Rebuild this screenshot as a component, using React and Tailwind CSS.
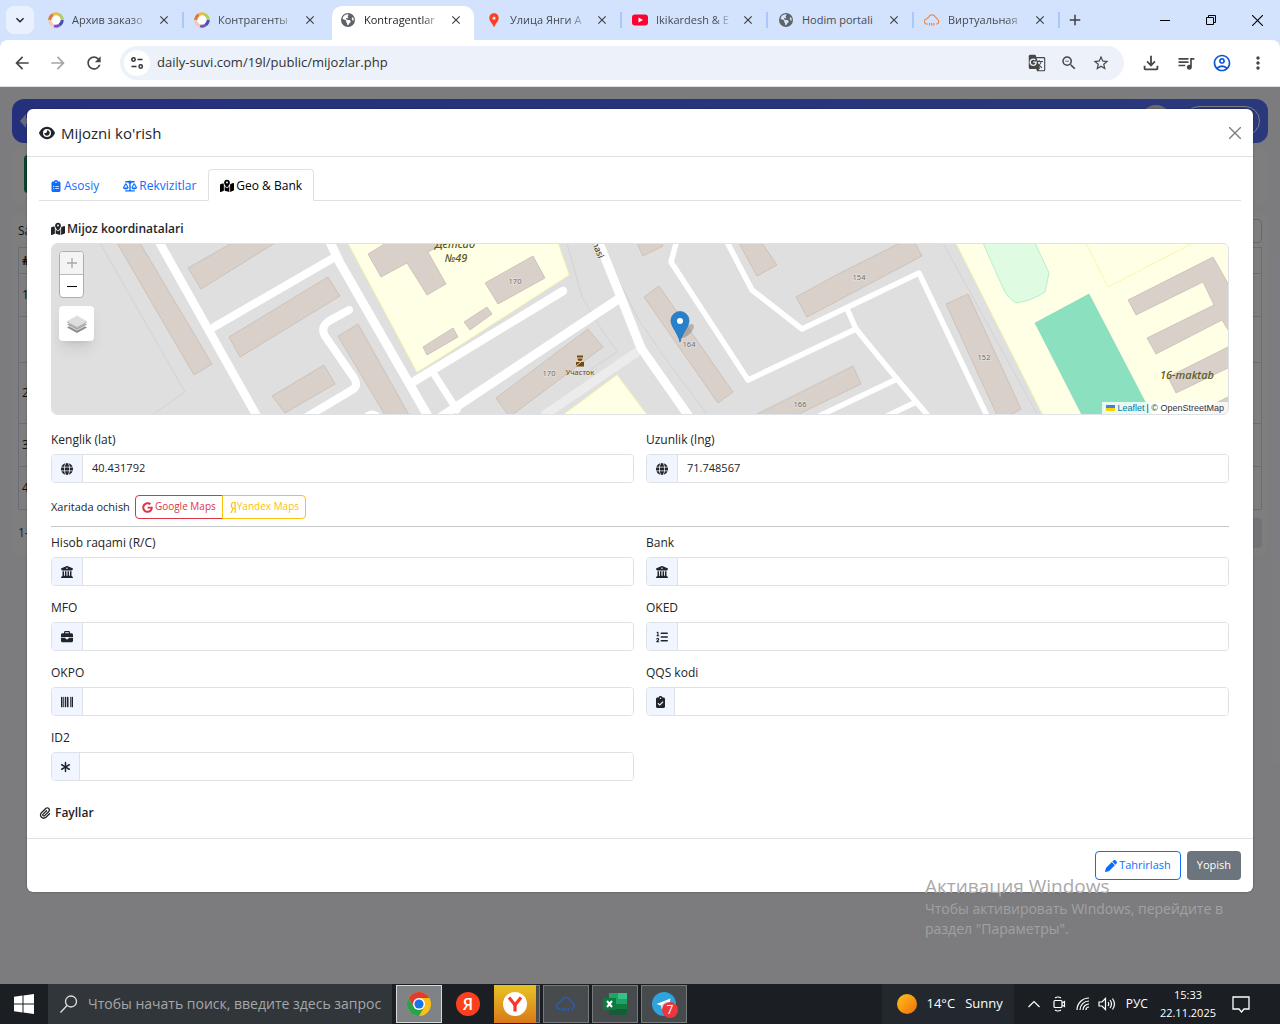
import React from "react";
import {
  FaEye,
  FaClipboardList,
  FaScaleBalanced,
  FaMapLocationDot,
  FaGlobe,
  FaGoogle,
  FaYandex,
  FaBuildingColumns,
  FaBriefcase,
  FaListOl,
  FaBarcode,
  FaClipboardCheck,
  FaAsterisk,
  FaPaperclip,
  FaPen,
  FaEarthAmericas,
} from "react-icons/fa6";
import {
  MdArrowBack,
  MdArrowForward,
  MdRefresh,
  MdGTranslate,
  MdZoomOut,
  MdStarOutline,
  MdOutlineFileDownload,
  MdQueueMusic,
  MdOutlineAccountCircle,
  MdMoreVert,
  MdClose,
  MdAdd,
  MdKeyboardArrowDown,
  MdLocationPin,
} from "react-icons/md";

function RingIcon() {
  return (
    <svg viewBox="0 0 16 16" className="size-4" fill="none" strokeWidth="3">
      <circle cx="8" cy="8" r="5.500" fill="#fff" />
      <path d="M1.800 8A6.200 6.200 0 0 1 5 2.600" stroke="#e8762d" />
      <path d="M5 2.600a6.200 6.200 0 0 1 5-.5" stroke="#f0b93a" />
      <path d="M10 2.100A6.200 6.200 0 0 1 14.200 8" stroke="#b5cc5a" />
      <path d="M14.200 8a6.200 6.200 0 0 1-3 5.300" stroke="#4a4fb5" />
      <path d="M11.200 13.300A6.200 6.200 0 0 1 6 13.900" stroke="#7b50b8" />
      <path d="M6 13.900A6.200 6.200 0 0 1 1.800 8" stroke="#f3c9b4" />
    </svg>
  );
}

function CloudIcon({ className }) {
  return (
    <svg viewBox="0 0 16 16" className={className} fill="none" stroke="currentColor" strokeWidth="1.2" strokeLinejoin="round">
      <path d="M4 12H3.2A2.5 2.5 0 0 1 2.6 7 3 3 0 0 1 4.6 5.400A3.600 3.600 0 0 1 11.500 5.400 3 3 0 0 1 13.300 7.200 2.600 2.600 0 0 1 13 12h-1" />
      <path d="M5.500 11v2.500M7.200 11l1 2.500M10 11v2.500" />
    </svg>
  );
}

const browserTabs = [
  { title: "Архив заказо", icon: <RingIcon />, sep: true, fade: true },
  { title: "Контрагенты", icon: <RingIcon />, fade: true },
  { title: "Kontragentlar", icon: <FaEarthAmericas className="m-px size-3.5 text-[#5f6368]" />, active: true, fade: true },
  { title: "Улица Янги А", icon: <MdLocationPin className="size-[18px] text-[#fc3f1d]" />, sep: true, fade: true },
  {
    title: "Ikikardesh & E",
    sep: true,
    fade: true,
    icon: (
      <svg viewBox="0 0 16 16" className="size-4">
        <rect y="2.500" width="16" height="11" rx="3" fill="#ff0033" />
        <path d="M6.500 5.500v5L11 8z" fill="#fff" />
      </svg>
    ),
  },
  { title: "Hodim portali", icon: <FaEarthAmericas className="m-px size-3.5 text-[#5f6368]" />, sep: true },
  { title: "Виртуальная", icon: <CloudIcon className="size-4 text-[#f08a4b]" />, sep: true, fade: true },
];

function TabStrip() {
  return (
    <div className="flex h-10 shrink-0 bg-[#d3e3fd] pl-1.5">
      <button aria-label="Поиск вкладок" className="mt-1.5 flex h-7 w-7 shrink-0 items-center justify-center rounded-lg bg-[#e9f1fe] text-[#1f1f1f]">
        <MdKeyboardArrowDown className="size-4" />
      </button>
      <div className="ml-1 flex">
        {browserTabs.map((t) => (
          <div
            key={t.title}
            className={
              t.active
                ? "flex w-[146px] items-start px-0.5 text-[#1f1f1f]"
                : "flex w-[146px] items-start px-0.5 text-[#474a4f]"
            }
          >
            <div
              className={
                t.active
                  ? "mt-1.5 flex h-[34px] w-full items-start rounded-t-[10px] bg-white pl-2"
                  : "mt-1.5 flex h-[34px] w-full items-start pl-2"
              }
            >
              <div className="flex h-7 w-full items-center">
                <span className="flex w-4 shrink-0 justify-center">{t.icon}</span>
                <span
                  className={
                    t.fade
                      ? "ml-2 w-[78px] whitespace-nowrap text-[11px] [mask-image:linear-gradient(to_right,black_75%,transparent)]"
                      : "ml-2 w-[78px] whitespace-nowrap text-[11px]"
                  }
                >
                  {t.title}
                </span>
                <button aria-label={"Закрыть " + t.title} className="ml-[7px] text-[#3c4043]">
                  <MdClose className="size-3.5" />
                </button>
              </div>
            </div>
            <div className={t.sep ? "mt-3 h-4 w-0.5 shrink-0 translate-x-0.5 bg-[#a8c7fa]" : "hidden"} />
          </div>
        ))}
      </div>
      <button aria-label="Новая вкладка" className="ml-1.5 h-10 text-[#3c4043]">
        <MdAdd className="size-[18px]" />
      </button>
      <div className="ml-auto flex text-black">
        <button aria-label="Свернуть" className="flex w-[46px] items-center justify-center">
          <svg viewBox="0 0 10 10" className="size-2.5" stroke="currentColor"><path d="M0 5.500h10" /></svg>
        </button>
        <button aria-label="Развернуть" className="flex w-[46px] items-center justify-center">
          <svg viewBox="0 0 10 10" className="size-2.5" fill="none" stroke="currentColor"><path d="M.5 2.500h7v7h-7zM2.500 2.500v-2h7v7h-2" /></svg>
        </button>
        <button aria-label="Закрыть окно" className="flex w-[46px] items-center justify-center">
          <svg viewBox="0 0 10 10" className="size-[11px]" stroke="currentColor"><path d="M0 0l10 10M10 0L0 10" /></svg>
        </button>
      </div>
    </div>
  );
}

function Toolbar() {
  return (
    <div className="shrink-0 bg-[#d3e3fd]">
      <div className="flex h-[46px] items-center rounded-t-lg bg-white pl-3 pr-3 text-[#474747]">
        <button aria-label="Назад" className="mr-4"><MdArrowBack className="size-5" /></button>
        <button aria-label="Вперёд" className="mr-4 text-[#a6a6a6]"><MdArrowForward className="size-5" /></button>
        <button aria-label="Обновить" className="mr-4"><MdRefresh className="size-5" /></button>
        <div className="flex h-[34px] min-w-0 flex-1 items-center rounded-full bg-[#ecf1fa] pl-1 pr-3.5">
          <button aria-label="Сведения о сайте" className="flex size-[26px] shrink-0 items-center justify-center rounded-full bg-white text-[#303134]">
            <svg viewBox="0 0 14 14" className="size-3.5" fill="none" stroke="currentColor" strokeWidth="1.500">
              <circle cx="3.500" cy="3.500" r="1.700" /><path d="M7.500 3.500h5M1.500 10.500h5" /><circle cx="10.700" cy="10.500" r="1.700" />
            </svg>
          </button>
          <input aria-label="Адрес" defaultValue="daily-suvi.com/19l/public/mijozlar.php" className="ml-[7px] min-w-0 flex-1 bg-transparent text-[13px] text-[#303134] outline-none" />
          <button aria-label="Перевести" className="mr-3.5"><MdGTranslate className="size-[18px]" /></button>
          <button aria-label="Масштаб" className="mr-3.5"><MdZoomOut className="size-[18px]" /></button>
          <button aria-label="В закладки"><MdStarOutline className="size-[18px]" /></button>
        </div>
        <button aria-label="Загрузки" className="ml-4"><MdOutlineFileDownload className="size-[22px]" /></button>
        <button aria-label="Медиа" className="ml-3.5"><MdQueueMusic className="size-5" /></button>
        <button aria-label="Профиль" className="ml-4 text-[#0b57d0]"><MdOutlineAccountCircle className="size-5" /></button>
        <button aria-label="Меню" className="ml-4"><MdMoreVert className="size-5" /></button>
      </div>
      <div className="h-px bg-[#dfe3e8]" />
    </div>
  );
}

function BackgroundPage() {
  const rows = [
    { n: "1", cls: "h-[43px]" },
    { n: "", cls: "h-[46px]" },
    { n: "2", cls: "h-[61px]" },
    { n: "3", cls: "h-[43px]" },
    { n: "4", cls: "h-[43px]" },
  ];
  return (
    <div className="flex h-full flex-col bg-[#f8f9ff] px-3 pt-3 text-xs text-[#212529]" aria-hidden="true">
      <div className="flex h-11 shrink-0 items-center justify-between rounded-xl bg-linear-to-r from-[#4a61f8] to-[#5571f8] px-2">
        <svg viewBox="0 0 20 14" className="h-3.5 w-5" fill="#cdd3f5"><path d="M0 7l6-7v4h10v6H6v4z" /></svg>
        <div className="flex items-center gap-3">
          <div className="size-8 rounded-full bg-[#d9d9d9]" />
          <div className="h-[30px] w-[76px] rounded-full border border-white" />
        </div>
      </div>
      <div className="mt-0.5 flex h-[58px] shrink-0 items-center rounded-xl bg-[#fdfdff] px-3">
        <div className="h-[38px] w-20 rounded bg-[#198754]" />
      </div>
      <div className="mt-2.5 rounded-xl bg-[#fdfdff] px-1.5 pb-2 pt-1.5">
        <div className="mb-1 flex h-6 items-center justify-between">
          <span>Sahifada</span>
          <div className="h-6 w-40 rounded border border-[#cdd0d8]" />
        </div>
        <table className="w-full border border-[#d3d9f2]">
          <tbody>
            <tr className="h-[26px]"><td className="px-[3px] font-bold">#</td></tr>
            {rows.map((r, i) => (
              <tr key={i} className={r.cls + " border border-[#d3d9f2]"}><td className="px-[3px]">{r.n}</td></tr>
            ))}
          </tbody>
        </table>
        <div className="mt-2 flex h-[30px] items-center justify-between">
          <span className="text-[#24408f]">1-4 / 4</span>
          <div className="h-[30px] w-20 rounded bg-[#e3e6ec]" />
        </div>
      </div>
    </div>
  );
}

function MapDrawing() {
  return (
    <svg viewBox="52 244 1176 170" preserveAspectRatio="xMidYMid slice" className="block h-[170px] w-full bg-[#dfdfdf]" fontFamily="'Noto Sans', sans-serif">
      <g fill="none" stroke="#cfcfcf" strokeWidth="0.800">
        <path d="M100 243L185 392L153 414" />
        <path d="M567 243L582 297L600 327L617 352L590 370" />
        <path d="M600 243L637 317L662 354L707 414" />
        <path d="M943 243L1037 414" />
      </g>
      <g fill="#ffffe5" stroke="#f7f7b0" strokeWidth="1">
        <path d="M348 243L417 372L440 358L569 275L558 243Z" />
        <path d="M563 415L617 375L647 415Z" />
        <path d="M956 243L1043 415H1230V243Z" />
        <path d="M1086 243L1108 287L1193 243" fill="none" />
      </g>
      <path d="M983 243L1003 288Q1006 296 1016 303Q1031 301 1045 292L1049 273L1035 243Z" fill="#dffce2" stroke="#b5efcb" />
      <path d="M1035 323L1089 294L1152 415H1082Z" fill="#8ae0bf" stroke="#7ad5b2" strokeWidth="0.500" />
      <g fill="#d9d0c9" stroke="#c9bdb4" strokeWidth="0.800">
        <path d="M117 243H140L212 364L194 375Z" />
        <path d="M188 268L232 243H275L201 289Z" />
        <path d="M229 337L328 277L340 296L240 357Z" />
        <path d="M338 336L358 324L409 415H385Z" />
        <path d="M272 396L324 365L335 384L285 413Z" />
        <path d="M386 243L368 254L381 277L407 263L427 295L446 284L428 252L445 243Z" />
        <path d="M423 347L453 328L458 337L427 355Z" />
        <path d="M464 322L487 307L492 314L470 330Z" />
        <path d="M485 283L533 256L545 278L498 304Z" />
        <path d="M496 398L588 329L603 347L512 415H508Z" />
        <path d="M644 297L659 286L733 392L718 403Z" />
        <path d="M637 243L643 256L663 246L662 243Z" />
        <path d="M739 243H762L777 265L757 276Z" />
        <path d="M796 297L840 273L900 243H915L922 256L807 317Z" />
        <path d="M755 415L853 366L861 384L797 415Z" />
        <path d="M946 304L968 294L1021 409L1010 415H997Z" />
        <path d="M1128 300L1213 257L1230 287V333L1222 320L1156 354L1147 338L1214 305L1203 282L1136 315Z" />
        <path d="M1168 377L1230 346V367L1176 393Z" />
        <path d="M1200 411L1230 396V415H1202Z" />
      </g>
      <path d="M640 350L543 416" stroke="#ececec" strokeWidth="9" fill="none" />
      <g fill="none" stroke="#fff" strokeLinejoin="round" strokeLinecap="round">
        <path d="M158 240L258 418" strokeWidth="8.500" />
        <path d="M214 327L335 257" strokeWidth="8" />
        <path d="M329 240L340 263L429 418" strokeWidth="9" />
        <path d="M349 310L329 321Q320 327 325 336L354 378Q359 386 352 390L305 418" strokeWidth="8" />
        <path d="M366 419Q372 411 379 419" strokeWidth="9" />
        <path d="M413 382L563 291" strokeWidth="8.500" />
        <path d="M438 419L617 300" strokeWidth="9" />
        <path d="M434 374L457 410" strokeWidth="7" />
        <path d="M597 238L620 295L641 348L690 418" strokeWidth="9" />
        <path d="M677 240L671 262L748 380L856 329" strokeWidth="5.500" />
        <path d="M726 240L752 290L802 329L919 273L988 418" strokeWidth="5.500" />
        <path d="M848 311L856 329L897 379L930 418" strokeWidth="5.500" />
        <path d="M815 418L897 379M885 417L916 402" strokeWidth="5.500" />
      </g>
      <g fontSize="7.500" fill="#6b6b6b" textAnchor="middle" stroke="#e6e0dc" strokeWidth="1.500" paintOrder="stroke">
        <text x="515" y="284">170</text>
        <text x="549" y="376">170</text>
        <text x="689" y="347">164</text>
        <text x="859" y="280">154</text>
        <text x="800" y="407">166</text>
        <text x="984" y="360">152</text>
      </g>
      <g fill="#5a5a20" fontSize="11" fontStyle="italic" fontWeight="500" textAnchor="middle">
        <text x="455" y="248">Детсад</text>
        <text x="456" y="262">№49</text>
        <text x="1187" y="379">16-maktab</text>
      </g>
      <text x="592" y="243" fontSize="9" fill="#333" stroke="#e8e8e8" strokeWidth="1.500" paintOrder="stroke" transform="rotate(68 592 243)">hasi</text>
      <g fill="#734a08">
        <path d="M577 355.500h6v2h-6zM577.500 358.500h5a2.500 2.500 0 0 1-5 0zM576 362h8v4.500h-8z" />
        <path d="M576 366l5-4" stroke="#d9d0c9" />
        <text x="580" y="375" fontSize="7.500" textAnchor="middle">Участок</text>
      </g>
      <ellipse cx="687" cy="331" rx="9" ry="4" fill="#000" opacity="0.200" transform="rotate(-45 687 331)" />
      <path d="M680 342C678 333 671 327 671 320.500a9 9 0 0 1 18 0C689 327 682 333 680 342Z" fill="#2a81cb" stroke="#1f6cb0" strokeWidth="0.700" />
      <circle cx="680" cy="321" r="3" fill="#fff" />
    </svg>
  );
}

function MapPanel() {
  return (
    <div className="relative mt-[5px] overflow-hidden rounded-md border border-[#dee2e6]">
      <MapDrawing />
      <div className="absolute left-[7px] top-[7px] flex flex-col items-start">
        <div className="overflow-hidden rounded-sm border border-[#adadad] bg-white">
          <button aria-label="Kattalashtirish" className="flex h-[23px] w-[23px] items-center justify-center border-b border-[#bbb] bg-[#f4f4f4] text-[#a8a8a8]">
            <svg viewBox="0 0 10 10" className="size-2.5" stroke="currentColor" strokeWidth="1.300"><path d="M0 5h10M5 0v10" /></svg>
          </button>
          <button aria-label="Kichraytirish" className="flex h-[22px] w-[23px] items-center justify-center text-black">
            <svg viewBox="0 0 10 10" className="size-2.5" stroke="currentColor" strokeWidth="1.100"><path d="M0 5.500h10" /></svg>
          </button>
        </div>
        <button aria-label="Qatlamlar" className="mt-2 flex size-[35px] items-center justify-center rounded bg-white shadow-lg">
          <svg viewBox="0 0 20 20" className="size-5">
            <path d="M0 13.500L10 19l10-5.500-2-1.200-8 4.300-8-4.300z" fill="#8f8f8f" />
            <path d="M0 10.500L10 16l10-5.500-2-1.200-8 4.300-8-4.300z" fill="#a9a9a9" />
            <path d="M0 7.200L10 12.800l10-5.600L10 1.500z" fill="#dedede" />
            <path d="M0 7.200L10 12.800l10-5.600v1.200L10 14 0 8.400z" fill="#b9b9b9" />
          </svg>
        </button>
      </div>
      <div className="absolute bottom-0 right-0 flex h-3 items-center gap-0.5 bg-white/80 px-1 font-['Liberation_Sans',sans-serif] text-[9px] text-[#333]">
        <svg viewBox="0 0 9 6" className="h-1.5 w-[9px]"><path fill="#4c7be1" d="M0 0h9v3H0z" /><path fill="#ffd500" d="M0 3h9v3H0z" /></svg>
        <a href="#leaflet" className="text-[#0078a8]">Leaflet</a>
        <span>| © OpenStreetMap</span>
      </div>
    </div>
  );
}

function Field({ id, label, icon, value = "" }) {
  return (
    <div>
      <label htmlFor={id} className="block h-[18px] text-xs leading-[18px]">{label}</label>
      <div className="mt-[5px] flex h-[29px] overflow-hidden rounded border border-[#dee2e6]">
        <span className="flex items-center border-r border-[#dee2e6] bg-[#f1f5ff] px-[9px] text-xs">{icon}</span>
        <input id={id} defaultValue={value} className="min-w-0 flex-1 bg-white px-[9px] text-[11px] outline-none" />
      </div>
    </div>
  );
}

function Modal() {
  return (
    <div role="dialog" aria-label="Mijozni ko'rish" className="rounded-md bg-white text-xs text-[#212529] shadow-[0_0_2px_rgba(0,0,0,0.400)]">
      <div className="flex h-12 items-center justify-between border-b border-[#dee2e6] px-3">
        <h1 className="flex items-center gap-1.5 text-[15px] font-medium leading-5 text-[#212529]">
          <FaEye className="size-4" />
          Mijozni ko'rish
        </h1>
        <button aria-label="Yopish oynasi" className="text-[#7f7f7f]">
          <svg viewBox="0 0 12 12" className="size-3" stroke="currentColor" strokeWidth="1.400"><path d="M0 0l12 12M12 0L0 12" /></svg>
        </button>
      </div>

      <div className="px-3 pt-3">
        <div role="tablist" className="flex border-b border-[#dee2e6]">
          <button role="tab" className="-mb-px flex h-8 items-center gap-[3px] px-3 pt-0.5 text-[#0d6efd]"><FaClipboardList className="h-3 w-2.5" />Asosiy</button>
          <button role="tab" className="-mb-px flex h-8 items-center gap-0.5 px-3 pt-0.5 text-[#0d6efd]"><FaScaleBalanced className="size-3.5" />Rekvizitlar</button>
          <button role="tab" aria-selected="true" className="-mb-px flex h-8 items-center gap-0.5 rounded-t border border-b-white border-[#dee2e6] bg-white px-[11px] pt-0.5 text-black"><FaMapLocationDot className="size-3.5" />Geo &amp; Bank</button>
        </div>

        <div className="px-3 pt-[19px]">
          <h2 className="flex h-[18px] items-center gap-0.5 font-semibold"><FaMapLocationDot className="size-3.5" />Mijoz koordinatalari</h2>
          <MapPanel />

          <div className="mt-4 grid grid-cols-2 gap-x-3">
            <Field id="lat" label="Kenglik (lat)" value="40.431792" icon={<FaGlobe />} />
            <Field id="lng" label="Uzunlik (lng)" value="71.748567" icon={<FaGlobe />} />
          </div>

          <div className="mt-3 flex h-6 items-center gap-[5px]">
            <span className="text-[11px]">Xaritada ochish</span>
            <div className="flex h-6 text-[10px]">
              <a href="#google" className="flex items-center gap-0.5 rounded-l-sm border border-[#dc3545] px-1.5 text-[#dc3545]"><FaGoogle className="size-[11px]" />Google Maps</a>
              <a href="#yandex" className="-ml-px flex items-center rounded-r-sm border border-[#ffc107] px-1.5 text-[#ffc107]"><FaYandex className="h-[11px] w-2" />Yandex Maps</a>
            </div>
          </div>
          <hr className="mt-[7px] border-[#c7c8ca]" />

          <div className="mt-[7px] grid grid-cols-2 gap-x-3 gap-y-[13px]">
            <Field id="rc" label="Hisob raqami (R/C)" icon={<FaBuildingColumns />} />
            <Field id="bank" label="Bank" icon={<FaBuildingColumns />} />
            <Field id="mfo" label="MFO" icon={<FaBriefcase />} />
            <Field id="oked" label="OKED" icon={<FaListOl />} />
            <Field id="okpo" label="OKPO" icon={<FaBarcode />} />
            <Field id="qqs" label="QQS kodi" icon={<FaClipboardCheck className="w-[9px]" />} />
            <Field id="id2" label="ID2" icon={<FaAsterisk className="w-[9px]" />} />
          </div>
        </div>

        <h2 className="mt-6 flex h-4 items-center gap-1 font-semibold"><FaPaperclip className="size-3" />Fayllar</h2>
      </div>

      <div className="mt-[17px] flex justify-end gap-1.5 border-t border-[#dee2e6] p-3">
        <button className="flex h-[29px] items-center gap-0.5 rounded border border-[#0d6efd] px-[9px] text-[11px] text-[#0d6efd]"><FaPen className="size-3" />Tahrirlash</button>
        <button className="flex h-[29px] items-center rounded bg-[#6c757d] px-2.5 text-[11px] font-medium text-white">Yopish</button>
      </div>
    </div>
  );
}

function Taskbar() {
  return (
    <div className="flex h-10 shrink-0 items-center bg-[#1b1f23] text-white">
      <button aria-label="Пуск" className="flex h-full w-12 items-center justify-center">
        <svg viewBox="0 0 20 20" className="size-5" fill="#fff"><path d="M0 2.800L8.500 1.600V9.500H0zM9.500 1.500L20 0v9.500H9.500zM0 10.500h8.500v7.900L0 17.200zM9.500 10.500H20V20L9.500 18.500z" /></svg>
      </button>
      <label className="flex h-full w-[344px] items-center gap-2.5 bg-[#31363b] pl-3">
        <svg viewBox="0 0 18 18" className="size-[18px] shrink-0" fill="none" stroke="#e0e0e0" strokeWidth="1.300"><circle cx="11" cy="6.500" r="5.500" /><path d="M7 10.500L.5 17.500" /></svg>
        <input aria-label="Поиск" placeholder="Чтобы начать поиск, введите здесь запрос" className="min-w-0 flex-1 bg-transparent text-sm outline-none placeholder:text-[#a5a7a9]" />
      </label>
      <div className="ml-1 flex items-center">
        <button aria-label="Chrome" className="flex h-[38px] w-[46px] items-center justify-center border border-[#d8d9da] bg-[#808386]">
          <svg viewBox="0 0 24 24" className="size-6">
            <circle cx="12" cy="12" r="12" fill="#fbc116" />
            <path d="M12 6h10.400A12 12 0 0 0 1.600 6l5.200 9z" fill="#e33b2e" />
            <path d="M1.600 6a12 12 0 0 0 10.400 18l5.200-9H6.800z" fill="#2ba24c" />
            <circle cx="12" cy="12" r="6" fill="#fff" /><circle cx="12" cy="12" r="4.600" fill="#1a73e8" />
          </svg>
        </button>
        <button aria-label="Яндекс" className="flex h-[38px] w-[52px] items-center justify-center">
          <span className="flex size-6 items-center justify-center rounded-full bg-[#fc3f1d] text-base font-semibold leading-none">Я</span>
        </button>
        <button aria-label="Yandex Browser" className="flex h-[38px] w-[42px] items-center justify-center bg-linear-to-b from-[#e5c326] to-[#d97818]">
          <svg viewBox="0 0 24 24" className="size-6"><circle cx="12" cy="12" r="12" fill="#fff" /><path d="M12 12.500v7" stroke="#f8362b" strokeWidth="3.200" /><path d="M6 5.500l6 7.500 6-7.500" fill="none" stroke="#f8362b" strokeWidth="3.200" /></svg>
        </button>
        <div className="mr-[3px] h-[38px] w-1 border border-l-0 border-[#76797b] bg-[#474b4e]" />
        <button aria-label="АТС" className="mr-[3px] flex h-[38px] w-[46px] items-center justify-center border border-[#76797b] bg-[#474b4e] text-[#2c5ca8]"><CloudIcon className="size-5" /></button>
        <button aria-label="Excel" className="mr-[3px] flex h-[38px] w-[46px] items-center justify-center border border-[#76797b] bg-[#474b4e]">
          <svg viewBox="0 0 24 22" className="h-[22px] w-6">
            <path d="M6 0h9v11H6z" fill="#21a366" /><path d="M15 0h9v6h-9z" fill="#33c481" /><path d="M15 6h9v5h-9z" fill="#21a366" /><path d="M6 11h9v5H6z" fill="#107c41" /><path d="M15 11h9v5h-9z" fill="#107c41" /><path d="M6 16h18v6H6z" fill="#185c37" />
            <path d="M0 5h13v12H0z" fill="#0f7a3f" /><path d="M4 8l5 6M9 8l-5 6" stroke="#fff" strokeWidth="2" />
          </svg>
        </button>
        <button aria-label="Telegram" className="relative flex h-[38px] w-[46px] items-center justify-center border border-[#76797b] bg-[#474b4e]">
          <svg viewBox="0 0 24 24" className="size-6"><circle cx="12" cy="12" r="12" fill="#2fa3dc" /><path d="M4.500 12l14-5.500-2.300 12-4.200-3-2.200 2-.8-4z" fill="#fff" /><path d="M9 13.500l7.500-5.500-5.500 6.500" fill="#b6d6ea" /></svg>
          <span className="absolute bottom-1 right-2 flex size-4 items-center justify-center rounded-full bg-[#e8383d] text-xs leading-none">7</span>
        </button>
      </div>
      <div className="ml-auto flex h-full items-center bg-[#22282d] pl-[15px] pr-[11px] text-[13px]">
        <span className="size-5 rounded-full bg-linear-to-br from-[#ffc21a] to-[#ef6c0c]" />
        <span className="ml-2.5">14°C</span>
        <span className="ml-2.5">Sunny</span>
      </div>
      <div className="flex items-center pl-3.5 text-xs">
        <svg viewBox="0 0 12 8" className="h-2 w-3" fill="none" stroke="#fff" strokeWidth="1.200"><path d="M.5 7L6 1.500 11.500 7" /></svg>
        <svg viewBox="0 0 14 18" className="ml-3 h-[18px] w-3.5" fill="none" stroke="#fff" strokeWidth="1.200"><rect x="2" y="5.500" width="8" height="7" rx="1" /><path d="M10 8l2.500-1.500v5L10 10M3 3q3-2 6 0M3 15q3 2 6 0" /></svg>
        <svg viewBox="0 0 14 14" className="ml-2.5 size-3.5" fill="none" stroke="#fff" strokeWidth="1.200"><path d="M1 13A12 12 0 0 1 13 1M4 13a9 9 0 0 1 9-9M7 13a6 6 0 0 1 6-6M10 13a3 3 0 0 1 3-3" /></svg>
        <svg viewBox="0 0 18 14" className="ml-2 h-3.5 w-[18px]" fill="none" stroke="#fff" strokeWidth="1.200"><path d="M1 5h3l3.500-3.500v11L4 9H1zM10 5q1.500 2 0 4M12 3q3 4 0 8M14.500 1.500q4 5.500 0 11" /></svg>
        <span className="ml-2.5">РУС</span>
        <span className="ml-3 text-center text-[11px] leading-[18px]">15:33<br />22.11.2025</span>
        <svg viewBox="0 0 18 18" className="ml-4 mr-[30px] size-[18px]" fill="none" stroke="#fff" strokeWidth="1.300"><path d="M1 2h16v12h-5l-2.500 3L7 14H1z" /></svg>
      </div>
    </div>
  );
}

export default function App() {
  return (
    <div className="flex h-screen flex-col overflow-hidden font-['Open_Sans','Noto_Sans',sans-serif]">
      <TabStrip />
      <Toolbar />
      <main className="relative min-h-0 flex-1">
        <BackgroundPage />
        <div className="absolute inset-0 bg-black/50 px-[27px] pt-[22px]">
          <Modal />
        </div>
        <div className="pointer-events-none absolute bottom-[45px] right-[30px] w-[325px] text-[#a0a1a3]">
          <p className="text-[19px] leading-[25px] text-[#a9a9aa]">Активация Windows</p>
          <p className="text-sm leading-5">Чтобы активировать Windows, перейдите в раздел "Параметры".</p>
        </div>
      </main>
      <Taskbar />
    </div>
  );
}
